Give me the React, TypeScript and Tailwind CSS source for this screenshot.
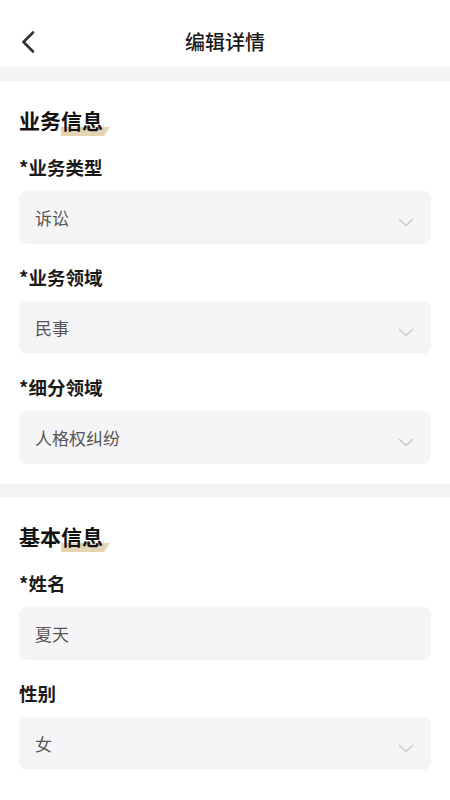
const font = { fontFamily: '"Noto Sans CJK SC", "Noto Sans", sans-serif' };

function BackIcon() {
  return (
    <svg width="14" height="22" viewBox="0 0 14 22" fill="none" className="ml-[21px]">
      <path d="M12 1.5 2.5 11l9.5 9.5" stroke="#333" strokeWidth="2.6" strokeLinecap="round" strokeLinejoin="round" />
    </svg>
  );
}

function DownIcon() {
  return (
    <svg width="16" height="9" viewBox="0 0 16 9" fill="none" className="mt-[10px]">
      <path d="M1.5 1.5 8 7.5l6.5-6" stroke="#c9c9cd" strokeWidth="1.5" strokeLinecap="round" strokeLinejoin="round" />
    </svg>
  );
}

interface FieldProps {
  label: string;
  value: string;
  required?: boolean;
  select?: boolean;
}

function Field({ label, value, required, select }: FieldProps) {
  return (
    <div className="mt-[21px]">
      <div className="text-[18.5px] leading-[24px] font-semibold text-[#1a1a1a]">
        {required ? "*" : ""}
        {label}
      </div>
      <div className="mt-[12px] h-[53px] rounded-[8px] bg-[#f5f5f7] flex items-center justify-between pl-[16px] pr-[17px]">
        <span className="text-[17px] text-[#555]">{value}</span>
        {select && <DownIcon />}
      </div>
    </div>
  );
}

function SectionTitle({ head, tail }: { head: string; tail: string }) {
  return (
    <h2 className="text-[21px] leading-[28px] font-bold text-[#111]">
      {head}
      <span className="relative inline-block">
        <span className="absolute left-0 right-[-7px] bottom-[-2px] h-[9px] bg-[#e6d3b1] [clip-path:polygon(0_0,100%_0,88%_100%,0_100%)]" />
        <span className="relative">{tail}</span>
      </span>
    </h2>
  );
}

export default function App() {
  return (
    <div className="w-[450px] min-h-[800px] bg-white" style={font}>
      {/* Header */}
      <div className="mt-[17px] h-[50px] grid grid-cols-[60px_1fr_60px] items-center">
        <BackIcon />
        <div className="text-center text-[20px] font-medium text-[#1a1a1a]">编辑详情</div>
        <div />
      </div>

      <div className="h-[15px] bg-[#f5f5f7]" />

      <div className="px-[19px] pt-[24px] pb-[20px]">
        <SectionTitle head="业务" tail="信息" />
        <Field label="业务类型" value="诉讼" required select />
        <Field label="业务领域" value="民事" required select />
        <Field label="细分领域" value="人格权纠纷" required select />
      </div>

      <div className="h-[14px] bg-[#f5f5f7]" />

      <div className="px-[19px] pt-[24px] pb-[30px]">
        <SectionTitle head="基本" tail="信息" />
        <Field label="姓名" value="夏天" required />
        <Field label="性别" value="女" select />
      </div>
    </div>
  );
}
